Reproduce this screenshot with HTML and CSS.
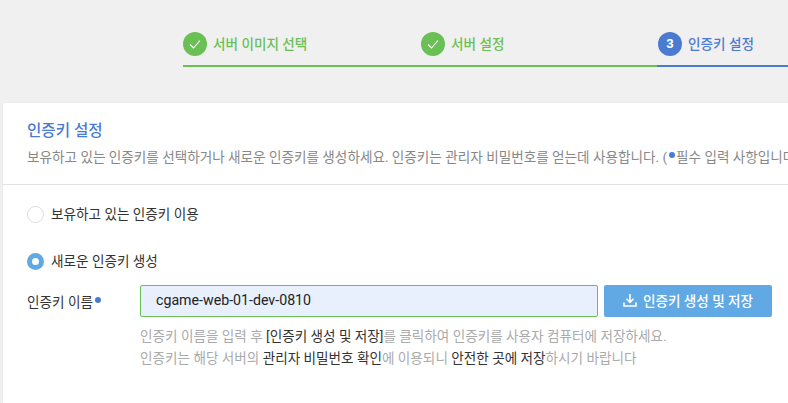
FILE: index.html
```html
<!DOCTYPE html>
<html lang="ko">
  <head>
    <meta charset="UTF-8" />
    <meta name="viewport" content="width=device-width, initial-scale=1.0" />
    <title>인증키 설정</title>
    <link rel="stylesheet" href="styles.css">
  </head>
  <body>
    <!-- Steps -->
    <ol class="steps">
      <li class="step step-done">
        <span class="step-icon">
          <svg width="14" height="14" viewBox="0 0 14 14"><path d="M2 7.5 L5.5 11 L12 3.5" fill="none" stroke="#fff" stroke-width="1.1" /></svg>
        </span>
        <span>서버 이미지 선택</span>
      </li>
      <li class="step step-done">
        <span class="step-icon">
          <svg width="14" height="14" viewBox="0 0 14 14"><path d="M2 7.5 L5.5 11 L12 3.5" fill="none" stroke="#fff" stroke-width="1.1" /></svg>
        </span>
        <span>서버 설정</span>
      </li>
      <li class="step step-current">
        <span class="step-icon">3</span>
        <span>인증키 설정</span>
      </li>
    </ol>
    <!-- Card -->
    <main class="card">
      <section class="card-head">
        <h2>인증키 설정</h2>
        <p>보유하고 있는 인증키를 선택하거나 새로운 인증키를 생성하세요. 인증키는 관리자 비밀번호를 얻는데 사용합니다. (<i class="dot"></i>필수 입력 사항입니다.)</p>
      </section>
      <section class="card-body">
        <label class="radio-row">
          <span class="radio"></span>
          보유하고 있는 인증키 이용
        </label>
        <label class="radio-row radio-row-new">
          <span class="radio radio-on"></span>
          새로운 인증키 생성
        </label>
        <div class="key-row">
          <label class="key-label">인증키 이름<i class="dot"></i></label>
          <div class="key-input">cgame-web-01-dev-0810</div>
          <button class="key-button">
            <svg width="14" height="14" viewBox="0 0 14 14"><path d="M7 1 V9 M3.5 5.8 L7 9.3 L10.5 5.8 M1 9.5 V13 H13 V9.5" fill="none" stroke="#fff" stroke-width="1.6" /></svg>
            인증키 생성 및 저장
          </button>
        </div>
        <div class="help">
          <p>인증키 이름을 입력 후 <b>[인증키 생성 및 저장]</b>를 클릭하여 인증키를 사용자 컴퓨터에 저장하세요.</p>
          <p>인증키는 해당 서버의 <b>관리자 비밀번호 확인</b>에 이용되니 <b>안전한 곳에 저장</b>하시기 바랍니다</p>
        </div>
      </section>
    </main>
  </body>
</html>
```
FILE: styles.css
```css
* {
  margin: 0;
  padding: 0;
  box-sizing: border-box;
}
html,
body {
  height: 100%;
  overflow: hidden;
}
body {
  font-family: Roboto, "Noto Sans CJK KR", sans-serif;
  font-size: 13.6px;
  color: #333;
  background-color: #f0f0f0;
  padding-left: 3px;
}
/* Steps */
.steps {
  list-style: none;
  display: flex;
  height: 103px;
  padding: 32px 0 0 180px;
}
.step {
  flex: 0 0 238px;
  height: 35px;
  display: flex;
  align-items: flex-start;
  gap: 6px;
  font-size: 13.6px;
  font-weight: 500;
  line-height: 24px;
  border-bottom: 2px solid #6abf55;
  color: #6abf55;
}
.step:nth-child(2) {
  flex-basis: 236px;
}
.step-current {
  flex: 1 0 0;
  margin-right: -3px;
  border-color: #4b7bd1;
  color: #4b7bd1;
}
.step-current .step-icon {
  margin-left: 1px;
  background: #4b7bd1;
}
.step-icon {
  width: 24px;
  height: 24px;
  border-radius: 50%;
  background: #6abf55;
  color: #fff;
  font-weight: 700;
  font-size: 13px;
  display: flex;
  align-items: center;
  justify-content: center;
}
/* Card */
.card {
  background: #fff;
  height: 300px;
  border-radius: 2px 0 0 0;
  width: calc(100% + 3px);
  box-shadow: 0 0 2px rgba(0, 0, 0, 0.08);
}
.card-head {
  height: 82px;
  padding: 18px 0 0 24px;
  border-bottom: 1px solid #e2e2e2;
  white-space: nowrap;
  overflow: hidden;
}
.card-head h2 {
  font-size: 15.6px;
  font-weight: 500;
  line-height: 20px;
  color: #4b7bd1;
}
.card-head p {
  margin-top: 6px;
  font-size: 13.6px;
  line-height: 20px;
  color: #888;
}
.dot {
  display: inline-block;
  width: 6px;
  height: 6px;
  border-radius: 50%;
  background: #4b7bd1;
  margin: 0 1px 7px 2px;
  vertical-align: middle;
}
.card-body {
  padding: 19px 0 0 24px;
}
.radio-row {
  display: flex;
  align-items: center;
  gap: 7px;
  height: 20px;
  line-height: 20px;
  color: #333;
}
.radio-row-new {
  margin-top: 27px;
}
.radio {
  width: 17px;
  height: 17px;
  border-radius: 50%;
  border: 1px solid #ddd;
  background: #fff;
}
.radio-on {
  border: 5px solid #60a9e4;
}
.key-row {
  display: flex;
  align-items: center;
  margin-top: 14px;
}
.key-label {
  width: 113px;
  color: #333;
}
.key-input {
  width: 458px;
  height: 32px;
  padding-left: 15px;
  line-height: 28px;
  font-size: 14.2px;
  color: #222;
  background: #e8f0fe;
  border: 1px solid #6abf55;
  border-radius: 2px;
}
.key-button {
  width: 168px;
  height: 32px;
  margin-left: 6px;
  padding-bottom: 2px;
  border: none;
  border-radius: 2px;
  background: #60a9e4;
  color: #fff;
  font-family: inherit;
  font-size: 13.6px;
  font-weight: 500;
  display: flex;
  align-items: center;
  justify-content: center;
  gap: 6px;
}
.help {
  margin: 8px 0 0 113px;
  color: #aaa;
  line-height: 22px;
  white-space: nowrap;
}
.help b {
  font-weight: 400;
  color: #333;
}
```
